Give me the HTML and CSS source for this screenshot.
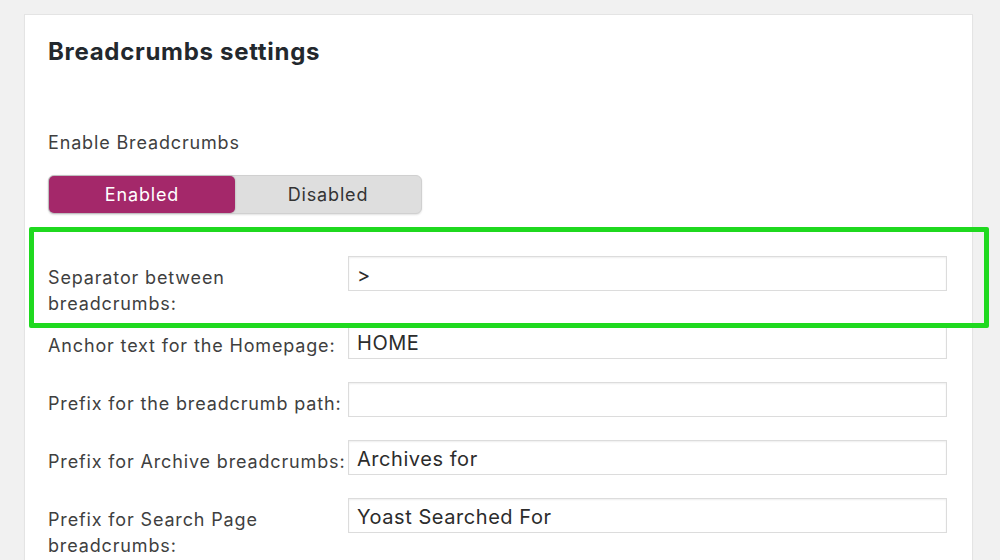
FILE: index.html
```html
<!DOCTYPE html>
<html>
<head>
<meta charset="utf-8">
<link rel="stylesheet" href="styles.css">
</head>
<body>
<div class="page">
  <section class="panel">
    <h2 class="title">Breadcrumbs settings</h2>
    <div class="field-label">Enable Breadcrumbs</div>
    <div class="toggle">
      <span class="seg seg-on">Enabled</span>
      <span class="seg seg-off">Disabled</span>
    </div>
    <div class="rows">
      <div class="row row-tall">
        <label class="lbl">Separator between<br>breadcrumbs:</label>
        <div class="inp">&gt;</div>
      </div>
      <div class="row">
        <label class="lbl">Anchor text for the Homepage:</label>
        <div class="inp">HOME</div>
      </div>
      <div class="row">
        <label class="lbl">Prefix for the breadcrumb path:</label>
        <div class="inp"></div>
      </div>
      <div class="row">
        <label class="lbl">Prefix for Archive breadcrumbs:</label>
        <div class="inp">Archives for</div>
      </div>
      <div class="row">
        <label class="lbl">Prefix for Search Page<br>breadcrumbs:</label>
        <div class="inp">Yoast Searched For</div>
      </div>
    </div>
  </section>
  <div class="highlight"></div>
</div>
</body>
</html>
```
FILE: styles.css
```css
html, body {
  margin: 0;
  padding: 0;
  background: #f1f1f1;
  overflow: hidden;
}
body {
  width: 1000px;
  height: 560px;
  font-family: Inter, "Liberation Sans", sans-serif;
  color: #3f3f3f;
}
.page {
  position: relative;
  padding: 14px 27px 0 24px;
  height: 546px;
  overflow: hidden;
}
.panel {
  background: #fff;
  border: 1px solid #e4e4e4;
  box-shadow: 0 1px 1px rgba(0,0,0,0.04);
  height: 580px;
  padding: 0 25px 0 23px;
  box-sizing: border-box;
}
.title {
  margin: 0;
  padding-top: 22px;
  font-size: 24px;
  font-weight: 700;
  line-height: 30px;
  color: #23282d;
  letter-spacing: 0.7px;
}
.field-label {
  margin-top: 63px;
  font-size: 18px;
  line-height: 26px;
  letter-spacing: 0.85px;
}
.toggle {
  margin-top: 19px;
  width: 374px;
  height: 39px;
  box-sizing: border-box;
  display: flex;
  background: #dedede;
  border: 1px solid #d0d0d0;
  border-radius: 6px;
  box-shadow: 0 1px 2px rgba(0,0,0,0.12);
}
.seg {
  display: flex;
  align-items: center;
  justify-content: center;
  font-size: 18px;
  letter-spacing: 0.85px;
}
.seg-on {
  width: 186px;
  background: #a4286a;
  color: #fff;
  border-radius: 5px;
  box-shadow: 0 0 2px rgba(0,0,0,0.3);
}
.seg-off {
  flex: 1;
  color: #333;
}
.rows {
  margin-top: 42px;
}
.row {
  display: grid;
  grid-template-columns: 300px 599px;
  align-items: start;
  height: 58px;
}
.row-tall {
  height: 68px;
}
.lbl {
  padding-top: 9px;
  font-size: 18px;
  line-height: 26px;
  letter-spacing: 0.85px;
  color: #3f3f3f;
}
.inp {
  height: 35px;
  box-sizing: border-box;
  border: 1px solid #dcdcdc;
  box-shadow: inset 0 1px 2px rgba(0,0,0,0.07);
  padding: 2px 8px 0;
  font-size: 20px;
  line-height: 33px;
  letter-spacing: 0.55px;
  color: #2c2c2c;
  background: #fff;
}
.highlight {
  position: absolute;
  left: 29px;
  top: 227px;
  width: 950px;
  height: 91px;
  border: 5px solid #1fd91f;
  border-radius: 2px;
}
```
